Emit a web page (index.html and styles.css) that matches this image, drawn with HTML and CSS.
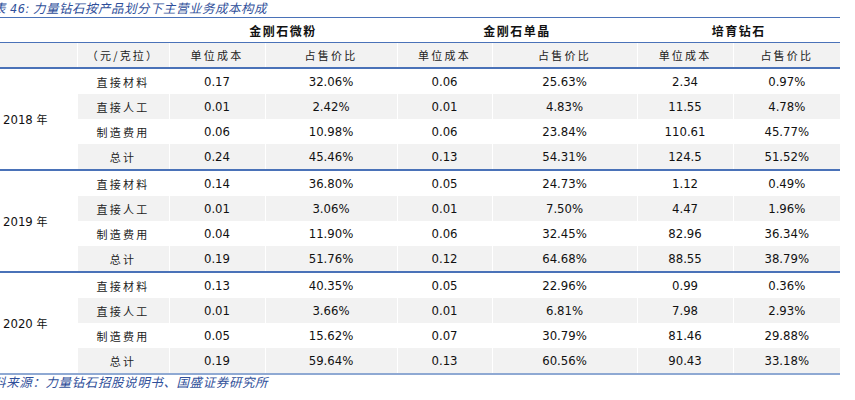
FILE: index.html
```html
<!DOCTYPE html>
<html lang="zh">
<head>
<meta charset="utf-8">
<link rel="stylesheet" href="styles.css">
</head>
<body>
<div class="wrap">
  <div class="title"><span class="num">图表 46:</span> 力量钻石按产品划分下主营业务成本构成</div>
  <table class="tbl">
    <colgroup>
      <col style="width:97px"><col style="width:92px"><col style="width:96px"><col style="width:132px">
      <col style="width:95px"><col style="width:145px"><col style="width:96px"><col style="width:107px">
    </colgroup>
    <thead>
      <tr class="h1">
        <th></th><th></th>
        <th colspan="2">金刚石微粉</th>
        <th colspan="2">金刚石单晶</th>
        <th colspan="2">培育钻石</th>
      </tr>
      <tr class="h2">
        <th></th><th>（元/克拉）</th>
        <th>单位成本</th><th>占售价比</th>
        <th>单位成本</th><th>占售价比</th>
        <th>单位成本</th><th>占售价比</th>
      </tr>
    </thead>
    <tbody class="blk">
      <tr><td class="yr" rowspan="4">2018 <span class="cj">年</span></td><td class="cat">直接材料</td><td>0.17</td><td>32.06%</td><td>0.06</td><td>25.63%</td><td>2.34</td><td>0.97%</td></tr>
      <tr class="g"><td class="cat">直接人工</td><td>0.01</td><td>2.42%</td><td>0.01</td><td>4.83%</td><td>11.55</td><td>4.78%</td></tr>
      <tr><td class="cat">制造费用</td><td>0.06</td><td>10.98%</td><td>0.06</td><td>23.84%</td><td>110.61</td><td>45.77%</td></tr>
      <tr class="g"><td class="cat">总计</td><td>0.24</td><td>45.46%</td><td>0.13</td><td>54.31%</td><td>124.5</td><td>51.52%</td></tr>
    </tbody>
    <tbody class="blk">
      <tr><td class="yr" rowspan="4">2019 <span class="cj">年</span></td><td class="cat">直接材料</td><td>0.14</td><td>36.80%</td><td>0.05</td><td>24.73%</td><td>1.12</td><td>0.49%</td></tr>
      <tr class="g"><td class="cat">直接人工</td><td>0.01</td><td>3.06%</td><td>0.01</td><td>7.50%</td><td>4.47</td><td>1.96%</td></tr>
      <tr><td class="cat">制造费用</td><td>0.04</td><td>11.90%</td><td>0.06</td><td>32.45%</td><td>82.96</td><td>36.34%</td></tr>
      <tr class="g"><td class="cat">总计</td><td>0.19</td><td>51.76%</td><td>0.12</td><td>64.68%</td><td>88.55</td><td>38.79%</td></tr>
    </tbody>
    <tbody class="blk last">
      <tr><td class="yr" rowspan="4">2020 <span class="cj">年</span></td><td class="cat">直接材料</td><td>0.13</td><td>40.35%</td><td>0.05</td><td>22.96%</td><td>0.99</td><td>0.36%</td></tr>
      <tr class="g"><td class="cat">直接人工</td><td>0.01</td><td>3.66%</td><td>0.01</td><td>6.81%</td><td>7.98</td><td>2.93%</td></tr>
      <tr><td class="cat">制造费用</td><td>0.05</td><td>15.62%</td><td>0.07</td><td>30.79%</td><td>81.46</td><td>29.88%</td></tr>
      <tr class="g"><td class="cat">总计</td><td>0.19</td><td>59.64%</td><td>0.13</td><td>60.56%</td><td>90.43</td><td>33.18%</td></tr>
    </tbody>
  </table>
  <div class="src">资料来源：力量钻石招股说明书、国盛证券研究所</div>
</div>
</body>
</html>
```
FILE: styles.css
```css
html, body {
  margin: 0;
  padding: 0;
  background: #ffffff;
}
body {
  font-family: "DejaVu Sans Condensed", "DejaVu Sans", "Noto Sans CJK SC", sans-serif;
  font-stretch: condensed;
  color: #111;
  overflow: hidden;
}
.wrap {
  margin-left: -20px;
  width: 860px;
}
.title {
  height: 17px;
  line-height: 15px;
  font-family: "Noto Sans CJK SC", sans-serif;
  font-size: 12.5px;
  font-style: italic;
  color: #2f4f9a;
  letter-spacing: 0.5px;
  white-space: nowrap;
}
.title .num {
  font-family: "DejaVu Sans Condensed", "DejaVu Sans", "Noto Sans CJK SC", sans-serif;
  font-style: italic;
}
.tbl {
  border-collapse: collapse;
  table-layout: fixed;
  width: 860px;
  font-size: 13px;
}
.tbl th, .tbl td {
  padding: 0;
  text-align: center;
  vertical-align: middle;
  white-space: nowrap;
  border-left: 1px solid #ffffff;
}
.tbl th:first-child, .tbl td.yr {
  border-left: none;
}
.h1 th {
  height: 24px;
  border-top: 1px solid #4a72b8;
  border-bottom: 1px solid #4a72b8;
  font-family: "Noto Sans CJK SC", sans-serif;
  font-weight: bold;
  font-size: 12px;
  letter-spacing: 1.5px;
  color: #111;
}
.h2 th {
  height: 24px;
  background: #f2f2f2;
  font-family: "Noto Sans CJK SC", sans-serif;
  font-weight: normal;
  font-size: 11px;
  letter-spacing: 2.2px;
  color: #222;
}
.tbl td {
  height: 25px;
}
.tbl tr.g td {
  background: #f2f2f2;
}
.tbl td.yr {
  background: #ffffff;
  text-align: left;
  padding-left: 23px;
}
.cj {
  font-family: "Noto Sans CJK SC", sans-serif;
  font-size: 11px;
}
.tbl td.cat {
  font-family: "Noto Sans CJK SC", sans-serif;
  font-size: 11px;
  letter-spacing: 2.2px;
  color: #222;
}
.blk {
  border-top: 2px solid #4a72b8;
}
.blk.last {
  border-bottom: 2px solid #8fa9d3;
}
.src {
  margin-top: 0;
  line-height: 14px;
  font-family: "Noto Sans CJK SC", sans-serif;
  font-size: 12.5px;
  font-style: italic;
  color: #2f4f9a;
  letter-spacing: 0.6px;
  white-space: nowrap;
}
```
